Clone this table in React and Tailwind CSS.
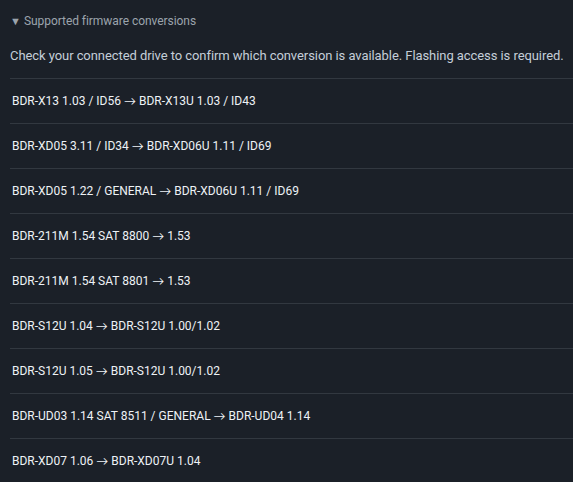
const rows = [
  'BDR-X13 1.03 / ID56 → BDR-X13U 1.03 / ID43',
  'BDR-XD05 3.11 / ID34 → BDR-XD06U 1.11 / ID69',
  'BDR-XD05 1.22 / GENERAL → BDR-XD06U 1.11 / ID69',
  'BDR-211M 1.54 SAT 8800 → 1.53',
  'BDR-211M 1.54 SAT 8801 → 1.53',
  'BDR-S12U 1.04 → BDR-S12U 1.00/1.02',
  'BDR-S12U 1.05 → BDR-S12U 1.00/1.02',
  'BDR-UD03 1.14 SAT 8511 / GENERAL → BDR-UD04 1.14',
  'BDR-XD07 1.06 → BDR-XD07U 1.04',
];

export default function App() {
  return (
    <div
      className="min-h-screen overflow-hidden bg-[#1b2028] pl-[10px] pt-[12px]"
      style={{ fontFamily: 'Roboto, Lato, sans-serif' }}
    >
      <div className="flex items-center gap-[3px] text-[12px] text-[#9ba4ad]">
        <span className="text-[11px] leading-none">▼</span>
        <span className="tracking-[-0.05px]">Supported firmware conversions</span>
      </div>
      <p className="mt-[16px] whitespace-nowrap text-[13px] tracking-[-0.07px] text-[#c4ced8]">
        Check your connected drive to confirm which conversion is available. Flashing access is required.
      </p>
      <ul className="mt-[12px]">
        {rows.map((r) => (
          <li
            key={r}
            className="flex h-[45px] items-center border-t border-[#323840] pl-[2px] text-[12px] text-[#eef2f6]"
          >
            {r}
          </li>
        ))}
      </ul>
    </div>
  );
}
